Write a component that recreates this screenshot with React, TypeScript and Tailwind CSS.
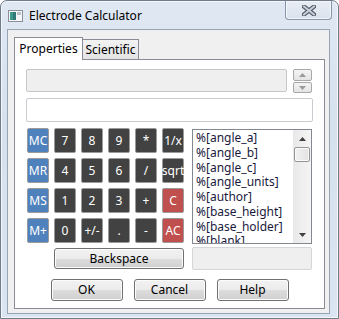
import React from 'react';

// calculator keys, row by row
const KEYS = [
  [
    { label: 'MC', kind: 'mem' },
    { label: '7', kind: 'num' },
    { label: '8', kind: 'num' },
    { label: '9', kind: 'num' },
    { label: '*', kind: 'num' },
    { label: '1/x', kind: 'num' },
  ],
  [
    { label: 'MR', kind: 'mem' },
    { label: '4', kind: 'num' },
    { label: '5', kind: 'num' },
    { label: '6', kind: 'num' },
    { label: '/', kind: 'num' },
    { label: 'sqrt', kind: 'num' },
  ],
  [
    { label: 'MS', kind: 'mem' },
    { label: '1', kind: 'num' },
    { label: '2', kind: 'num' },
    { label: '3', kind: 'num' },
    { label: '+', kind: 'num' },
    { label: 'C', kind: 'clear' },
  ],
  [
    { label: 'M+', kind: 'mem' },
    { label: '0', kind: 'num' },
    { label: '+/-', kind: 'num' },
    { label: '.', kind: 'num' },
    { label: '-', kind: 'num' },
    { label: 'AC', kind: 'clear' },
  ],
];

const VARIABLES = [
  '%[angle_a]',
  '%[angle_b]',
  '%[angle_c]',
  '%[angle_units]',
  '%[author]',
  '%[base_height]',
  '%[base_holder]',
  '%[blank]',
];

const KEY_COLORS: Record<string, string> = {
  mem: 'bg-[#4f81bd]',
  num: 'bg-[#424242]',
  clear: 'bg-[#c0504d]',
};

const CalcKey = ({ label, kind }: { label: string; kind: string }) => (
  <div
    className={`flex h-[25px] w-[22px] items-center justify-center rounded-[2px] border border-[#9a9a9a] text-[12px] leading-none text-white ${KEY_COLORS[kind]}`}
  >
    {label}
  </div>
);

const WinButton = ({ children, className = '' }: { children: React.ReactNode; className?: string }) => (
  <div
    className={`flex items-center justify-center rounded-[3px] border border-[#707070] bg-[linear-gradient(#f2f2f2_0%,#ebebeb_50%,#dddddd_51%,#cfcfcf_100%)] text-[12px] text-black shadow-[inset_0_0_0_1px_#fcfcfc] ${className}`}
  >
    {children}
  </div>
);

const Arrow = ({ up, color = '#404040' }: { up?: boolean; color?: string }) => (
  <svg width="7" height="4" viewBox="0 0 7 4">
    <path d={up ? 'M0 4 L3.5 0 L7 4 Z' : 'M0 0 L7 0 L3.5 4 Z'} fill={color} />
  </svg>
);

export default function App() {
  return (
    <div className="h-[319px] w-[339px] bg-white font-['Noto_Sans','Open_Sans',sans-serif]">
      <div className="flex h-[319px] w-[339px] flex-col rounded-t-[7px] border border-[#707c8a] bg-[linear-gradient(#dfe8f3,#d6e1ee_40%,#dbe5f1)] shadow-[inset_0_0_0_1px_#f4f7fb]">
        {/* title bar */}
        <div className="flex h-[28px] items-start">
          <div className="ml-[7px] mt-[9px] flex items-center">
            <svg width="15" height="12" viewBox="0 0 15 12">
              <rect x="0.5" y="0.5" width="14" height="11" fill="#f4f6f8" stroke="#8a9099" />
              <rect x="2" y="2" width="6" height="8" fill="#2f7a78" />
              <rect x="2" y="2" width="3" height="8" fill="#3d9a8e" />
              <rect x="9" y="2" width="4" height="3" fill="#b9c0c8" />
            </svg>
            <span className="ml-[6px] text-[12px] leading-none text-black">Electrode Calculator</span>
          </div>
          <div className="ml-auto mr-[6px] flex h-[19px] w-[47px] items-center justify-center rounded-b-[4px] border border-t-0 border-[#8795a7] bg-[linear-gradient(#e9eef5,#d9e2ed)] shadow-[inset_0_0_0_1px_#f3f6fa]">
            <svg width="14" height="11" viewBox="0 0 14 11">
              <path d="M2 1.5 L12 9.5 M12 1.5 L2 9.5" stroke="#4e5866" strokeWidth="4.2" strokeLinecap="round" />
              <path d="M2 1.5 L12 9.5 M12 1.5 L2 9.5" stroke="#c9d0d9" strokeWidth="2.2" strokeLinecap="round" />
            </svg>
          </div>
        </div>

        {/* client area */}
        <div className="ml-[6px] flex h-[285px] w-[323px] flex-col border border-[#97a4b4] bg-[#f0f0f0]">
          {/* tabs */}
          <div className="ml-[6px] mt-[7px] flex h-[22px] items-end">
            <div className="relative z-10 -mb-px flex h-[23px] w-[69px] justify-center border border-b-0 border-[#898c95] bg-white pt-[2px] text-[12px] text-black">
              Properties
            </div>
            <div className="-ml-px flex h-[20px] w-[57px] justify-center border border-b-0 border-[#898c95] bg-[linear-gradient(#f3f3f3,#e3e3e3)] text-[12px] leading-[19px] text-black">
              Scientific
            </div>
          </div>

          {/* tab page */}
          <div className="ml-[6px] flex h-[250px] w-[311px] flex-col border border-[#898c95] bg-white pl-[11px]">
            <div className="mt-[9px] flex items-start">
              <div className="h-[23px] w-[261px] rounded-[2px] border border-[#c4c6ca] bg-[#efefef]" />
              <div className="ml-[6px] flex flex-col gap-[1px]">
                <div className="flex h-[12px] w-[19px] items-center justify-center rounded-[2px] border border-[#a8a8a8] bg-[linear-gradient(#f4f4f4,#e4e4e4)]">
                  <Arrow up color="#9a9a9a" />
                </div>
                <div className="flex h-[11px] w-[19px] items-center justify-center rounded-[2px] border border-[#a8a8a8] bg-[linear-gradient(#f4f4f4,#e4e4e4)]">
                  <Arrow color="#9a9a9a" />
                </div>
              </div>
            </div>
            <div className="mt-[5px] h-[24px] w-[287px] rounded-[2px] border border-[#c9cbd0] bg-white" />

            {/* keys and variable list */}
            <div className="mt-[6px] flex items-start">
              <div className="ml-px grid w-[157px] grid-cols-6 gap-x-[5px] gap-y-[5px]">
                {KEYS.flat().map((k, i) => (
                  <CalcKey key={i} label={k.label} kind={k.kind} />
                ))}
              </div>
              <div className="ml-[8px] mt-px flex h-[115px] w-[120px] overflow-hidden border border-[#828790] bg-white">
                <div className="h-[113px] flex-1 overflow-hidden pl-[3px] pt-[1px]">
                  {VARIABLES.map((v) => (
                    <div key={v} className="h-[14.75px] overflow-hidden text-[12px] leading-[14.75px] text-[#1a1a40]">
                      {v}
                    </div>
                  ))}
                </div>
                <div className="flex w-[18px] flex-col items-center bg-[linear-gradient(90deg,#e8e8e8,#f5f5f5)]">
                  <div className="flex h-[17px] items-center">
                    <Arrow up />
                  </div>
                  <div className="h-[15px] w-[16px] rounded-[2px] border border-[#959595] bg-[linear-gradient(90deg,#f3f3f3,#e2e2e2)] shadow-[inset_0_0_0_1px_#fafafa]" />
                  <div className="mt-auto flex h-[17px] items-center">
                    <Arrow />
                  </div>
                </div>
              </div>
            </div>

            {/* backspace row */}
            <div className="mt-[3px] flex items-center">
              <div className="ml-px flex w-[157px] justify-end">
                <WinButton className="h-[21px] w-[130px]">Backspace</WinButton>
              </div>
              <div className="ml-[8px] h-[23px] w-[120px] rounded-[2px] border border-[#d4d6da] bg-[#efefef]" />
            </div>

            {/* dialog buttons */}
            <div className="-ml-[11px] mt-[9px] flex justify-center gap-[11px]">
              <WinButton className="h-[22px] w-[72px]">OK</WinButton>
              <WinButton className="h-[22px] w-[72px]">Cancel</WinButton>
              <WinButton className="h-[22px] w-[72px]">Help</WinButton>
            </div>
          </div>
        </div>
      </div>
    </div>
  );
}
